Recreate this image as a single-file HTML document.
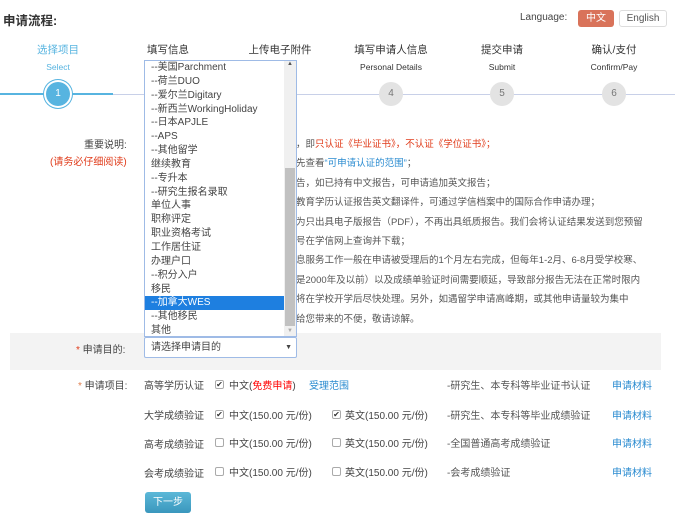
<!DOCTYPE html>
<html><head><meta charset="utf-8"><style>
*{margin:0;padding:0;box-sizing:border-box}
body{width:675px;height:516px;overflow:hidden;background:#fff;font-family:"Liberation Sans","Noto Sans CJK SC",sans-serif;font-size:10px;color:#555;position:relative}
.a{position:absolute;white-space:nowrap}
.step{position:absolute;text-align:center;width:120px;margin-left:-60px}
.step .t{font-size:10.5px;color:#333;position:absolute;top:42px;width:120px}
.step .s{font-size:8.5px;color:#333;position:absolute;top:62px;width:120px}
.c{position:absolute;top:82px;left:48px;width:24px;height:24px;border-radius:50%;background:#e3e3e3;color:#777;font-size:10px;text-align:center;line-height:24px}
.red{color:#e03b1a}
.blue{color:#2a8bd0}
.list{position:absolute;left:144px;top:60px;width:153px;height:277px;border:1px solid #9fbbe6;background:#fff;overflow:hidden}
.list .it{height:13.85px;line-height:13.85px;padding-left:6px;font-size:10px;color:#444;width:140px;white-space:nowrap}
.list .sel{background:#1e7fe0;color:#fff}
.sb{position:absolute;right:0;top:0;width:12px;height:100%;background:#f0f0f0}
.th{position:absolute;right:1px;top:107px;width:10px;height:158px;background:#c1c1c1}
.cb{position:absolute;width:9px;height:9px;border:1px solid #aaa;border-radius:2px;background:#fff;font-size:8px;line-height:7px;text-align:center;color:#333}
</style></head><body>
<div class="a" style="left:3px;top:10px;font-size:12.5px;font-weight:bold;color:#333">申请流程:</div>
<div class="a" style="left:520px;top:12px;font-size:10px;color:#444">Language:</div>
<div class="a" style="left:578px;top:10px;width:36px;height:17px;background:#d9735a;border-radius:3px;color:#fff;text-align:center;line-height:17px;font-size:10px">中文</div>
<div class="a" style="left:619px;top:10px;width:48px;height:17px;border:1px solid #ddd;border-radius:3px;color:#555;text-align:center;line-height:15px;font-size:10px">English</div>

<div class="a" style="left:0;top:93px;width:113px;height:2px;background:#57b4e0"></div>
<div class="a" style="left:113px;top:94px;width:562px;height:1px;background:#c8d0e8"></div>
<div class="step" style="left:58px"><div class="t" style="color:#57b4e0">选择项目</div><div class="s" style="color:#57b4e0">Select</div>
<div class="c" style="background:#57b4e0;color:#fff;box-shadow:0 0 0 2px #fff,0 0 0 3px #57b4e0">1</div></div>
<div class="step" style="left:168px"><div class="t">填写信息</div></div>
<div class="step" style="left:280px"><div class="t">上传电子附件</div></div>
<div class="step" style="left:391px"><div class="t">填写申请人信息</div><div class="s">Personal Details</div><div class="c">4</div></div>
<div class="step" style="left:502px"><div class="t">提交申请</div><div class="s">Submit</div><div class="c">5</div></div>
<div class="step" style="left:614px"><div class="t">确认/支付</div><div class="s">Confirm/Pay</div><div class="c">6</div></div>

<div class="a" style="left:84px;top:136px;font-size:10px;color:#444">重要说明:</div>
<div class="a" style="left:50px;top:153px;font-size:10px;color:#e03b1a">(请务必仔细阅读)</div>
<div class="a" style="left:296px;top:135px;font-size:9.5px;line-height:19.4px;color:#555">
，即<span class="red">只认证《毕业证书》，不认证《学位证书》；</span><br>
先查看<span class="blue">“可申请认证的范围”</span>；<br>
告，如已持有中文报告，可申请追加英文报告；<br>
教育学历认证报告英文翻译件，可通过学信档案中的国际合作申请办理；<br>
为只出具电子版报告（PDF），不再出具纸质报告。我们会将认证结果发送到您预留<br>
号在学信网上查询并下载；<br>
息服务工作一般在申请被受理后的1个月左右完成，但每年1-2月、6-8月受学校寒、<br>
是2000年及以前）以及成绩单验证时间需要顺延，导致部分报告无法在正常时限内<br>
将在学校开学后尽快处理。另外，如遇留学申请高峰期，或其他申请量较为集中<br>
给您带来的不便，敬请谅解。</div>

<div class="a" style="left:10px;top:333px;width:651px;height:37px;background:#f3f3f3"></div>
<div class="a" style="left:76px;top:341px;font-size:10px;color:#444"><span class="red">*</span> 申请目的:</div>
<div class="a" style="left:144px;top:337px;width:153px;height:21px;border:1px solid #9fbbe6;border-radius:2px;background:#fff;font-size:10px;color:#444;line-height:19px;padding-left:6px">请选择申请目的<span style="position:absolute;right:4px;font-size:7px">▼</span></div>

<div class="list">
<div class="it">--美国Parchment</div><div class="it">--荷兰DUO</div><div class="it">--爱尔兰Digitary</div><div class="it">--新西兰WorkingHoliday</div><div class="it">--日本APJLE</div><div class="it">--APS</div><div class="it">--其他留学</div><div class="it">继续教育</div><div class="it">--专升本</div><div class="it">--研究生报名录取</div><div class="it">单位人事</div><div class="it">职称评定</div><div class="it">职业资格考试</div><div class="it">工作居住证</div><div class="it">办理户口</div><div class="it">--积分入户</div><div class="it">移民</div><div class="it sel">--加拿大WES</div><div class="it">--其他移民</div><div class="it">其他</div>
<div class="sb"><span style="position:absolute;top:0;left:3px;font-size:6px;color:#555">▲</span><span class="th"></span><span style="position:absolute;bottom:2px;left:3px;font-size:6px;color:#aaa">▼</span></div>
</div>

<div class="a" style="left:78px;top:377px;font-size:10px;color:#444"><span style="color:#e08050">*</span> 申请项目:</div>
<div class="a" style="left:144px;top:377px;font-size:10px;color:#444">高等学历认证</div>
<div class="cb" style="left:215px;top:380px">✔</div>
<div class="a" style="left:229px;top:377px;font-size:10px;color:#444">中文(<span style="color:#f00">免费申请</span>)</div>
<div class="a blue" style="left:309px;top:377px;font-size:10px">受理范围</div>
<div class="a" style="left:447px;top:377px;font-size:10px;color:#555">-研究生、本专科等毕业证书认证</div>
<div class="a blue" style="left:612px;top:377px;font-size:10px">申请材料</div>

<div class="a" style="left:144px;top:407px;font-size:10px;color:#444">大学成绩验证</div>
<div class="cb" style="left:215px;top:410px">✔</div>
<div class="a" style="left:229px;top:407px;font-size:10px;color:#444">中文(150.00 元/份)</div>
<div class="cb" style="left:332px;top:410px">✔</div>
<div class="a" style="left:345px;top:407px;font-size:10px;color:#444">英文(150.00 元/份)</div>
<div class="a" style="left:447px;top:407px;font-size:10px;color:#555">-研究生、本专科等毕业成绩验证</div>
<div class="a blue" style="left:612px;top:407px;font-size:10px">申请材料</div>

<div class="a" style="left:144px;top:436px;font-size:10px;color:#444">高考成绩验证</div>
<div class="cb" style="left:215px;top:438px"></div>
<div class="a" style="left:229px;top:435px;font-size:10px;color:#444">中文(150.00 元/份)</div>
<div class="cb" style="left:332px;top:438px"></div>
<div class="a" style="left:345px;top:435px;font-size:10px;color:#444">英文(150.00 元/份)</div>
<div class="a" style="left:447px;top:435px;font-size:10px;color:#555">-全国普通高考成绩验证</div>
<div class="a blue" style="left:612px;top:435px;font-size:10px">申请材料</div>

<div class="a" style="left:144px;top:465px;font-size:10px;color:#444">会考成绩验证</div>
<div class="cb" style="left:215px;top:467px"></div>
<div class="a" style="left:229px;top:464px;font-size:10px;color:#444">中文(150.00 元/份)</div>
<div class="cb" style="left:332px;top:467px"></div>
<div class="a" style="left:345px;top:464px;font-size:10px;color:#444">英文(150.00 元/份)</div>
<div class="a" style="left:447px;top:464px;font-size:10px;color:#555">-会考成绩验证</div>
<div class="a blue" style="left:612px;top:464px;font-size:10px">申请材料</div>

<div class="a" style="left:145px;top:492px;width:46px;height:21px;border-radius:3px;background:linear-gradient(#5cb8d8,#3a97bd);color:#fff;font-size:10px;text-align:center;line-height:21px">下一步</div>
</body></html>
